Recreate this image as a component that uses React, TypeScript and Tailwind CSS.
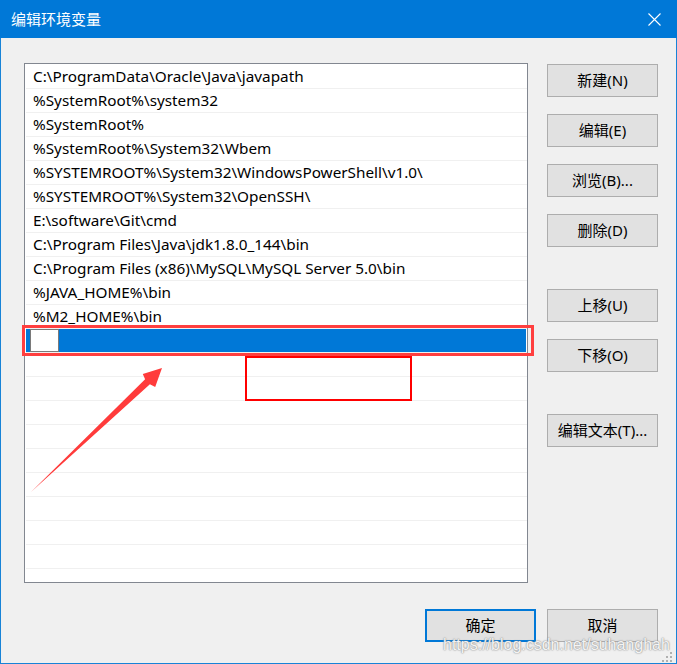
import React from 'react';

const paths = [
  'C:\\ProgramData\\Oracle\\Java\\javapath',
  '%SystemRoot%\\system32',
  '%SystemRoot%',
  '%SystemRoot%\\System32\\Wbem',
  '%SYSTEMROOT%\\System32\\WindowsPowerShell\\v1.0\\',
  '%SYSTEMROOT%\\System32\\OpenSSH\\',
  'E:\\software\\Git\\cmd',
  'C:\\Program Files\\Java\\jdk1.8.0_144\\bin',
  'C:\\Program Files (x86)\\MySQL\\MySQL Server 5.0\\bin',
  '%JAVA_HOME%\\bin',
  '%M2_HOME%\\bin',
];

const EMPTY_ROWS = 9;

function SideButton({ label, className = '' }: { label: string; className?: string }) {
  return (
    <button
      className={`flex h-[33px] w-[111px] items-center justify-center border border-[#adadad] bg-[#e1e1e1] text-[15px] text-black ${className}`}
    >
      {label}
    </button>
  );
}

export default function App() {
  return (
    <div className="relative flex h-[664px] w-[677px] flex-col font-['Noto_Sans','Noto_Sans_CJK_SC',sans-serif] text-black">
      {/* Title bar */}
      <div className="flex h-[38px] items-center justify-between bg-[#0078d7] pl-[11px] pr-[16px] text-white">
        <span className="text-[15px] leading-none">编辑环境变量</span>
        <svg width="13" height="13" viewBox="0 0 13 13" className="mt-px">
          <path d="M0.5 0.5 L12.5 12.5 M12.5 0.5 L0.5 12.5" stroke="white" strokeWidth="1.1" />
        </svg>
      </div>

      {/* Dialog body */}
      <div className="flex flex-1 flex-col border-x border-b border-[#1883d7] bg-[#f0f0f0] pl-[23px] pt-[25px]">
        <div className="flex gap-[19px]">
          {/* Path list */}
          <div className="h-[520px] w-[504px] overflow-hidden border border-[#828790] bg-white pl-px pt-px">
            {paths.map((p) => (
              <div
                key={p}
                className="flex h-[24px] items-center border-b border-[#f0f0f0] pl-[7px] pt-px text-[15.3px] leading-none whitespace-nowrap"
              >
                {p}
              </div>
            ))}
            <div className="flex h-[24px] border-b border-[#f0f0f0] pr-px">
              <div className="flex flex-1 bg-[#0078d7] pl-[4px]">
                <div className="h-full w-[29px] border border-[#7a7a7a] bg-white" />
              </div>
            </div>
            {Array.from({ length: EMPTY_ROWS }).map((_, i) => (
              <div key={i} className="h-[24px] border-b border-[#f0f0f0]" />
            ))}
          </div>

          {/* Action buttons */}
          <div className="flex flex-col pt-px">
            <SideButton label="新建(N)" />
            <SideButton label="编辑(E)" className="mt-[17px]" />
            <SideButton label="浏览(B)..." className="mt-[17px]" />
            <SideButton label="删除(D)" className="mt-[17px]" />
            <SideButton label="上移(U)" className="mt-[42px]" />
            <SideButton label="下移(O)" className="mt-[17px]" />
            <SideButton label="编辑文本(T)..." className="mt-[42px]" />
          </div>
        </div>

        {/* Footer buttons */}
        <div className="mt-[26px] flex justify-end gap-[11px] pr-[18px]">
          <button className="flex h-[33px] w-[111px] items-center justify-center border-2 border-[#0078d7] bg-[#e1e1e1] text-[15px]">
            确定
          </button>
          <button className="flex h-[33px] w-[111px] items-center justify-center border border-[#adadad] bg-[#e1e1e1] text-[15px]">
            取消
          </button>
        </div>
      </div>

      {/* Highlight marks */}
      <div className="absolute left-[22px] top-[325px] h-[31px] w-[512px] border-[3px] border-[#ff3f3f]" />
      <div className="absolute left-[245px] top-[356px] h-[45px] w-[167px] border-2 border-[#ff0000]" />
      <svg className="pointer-events-none absolute left-0 top-0" width="677" height="664">
        <polygon
          points="31,492 145.1,379.3 142.8,373.9 162,368 155.2,387 149.9,384.3"
          fill="#ff3b3b"
        />
      </svg>

      {/* Watermark */}
      <span className="absolute left-[443px] top-[637px] font-['Liberation_Sans',sans-serif] text-[16px] leading-none text-white/90 [text-shadow:0_0_2px_#8a8a8a,0_0_1px_#8a8a8a]">
        https://blog.csdn.net/suhanghah
      </span>

      {/* Resize grip */}
      <svg className="absolute left-[662px] top-[652px]" width="12" height="11">
        <rect x="8" y="0" width="2" height="2" fill="#b0b0b0" />
        <rect x="4" y="4" width="2" height="2" fill="#b0b0b0" />
        <rect x="8" y="4" width="2" height="2" fill="#b0b0b0" />
        <rect x="0" y="8" width="2" height="2" fill="#b0b0b0" />
        <rect x="4" y="8" width="2" height="2" fill="#b0b0b0" />
        <rect x="8" y="8" width="2" height="2" fill="#b0b0b0" />
      </svg>
    </div>
  );
}
